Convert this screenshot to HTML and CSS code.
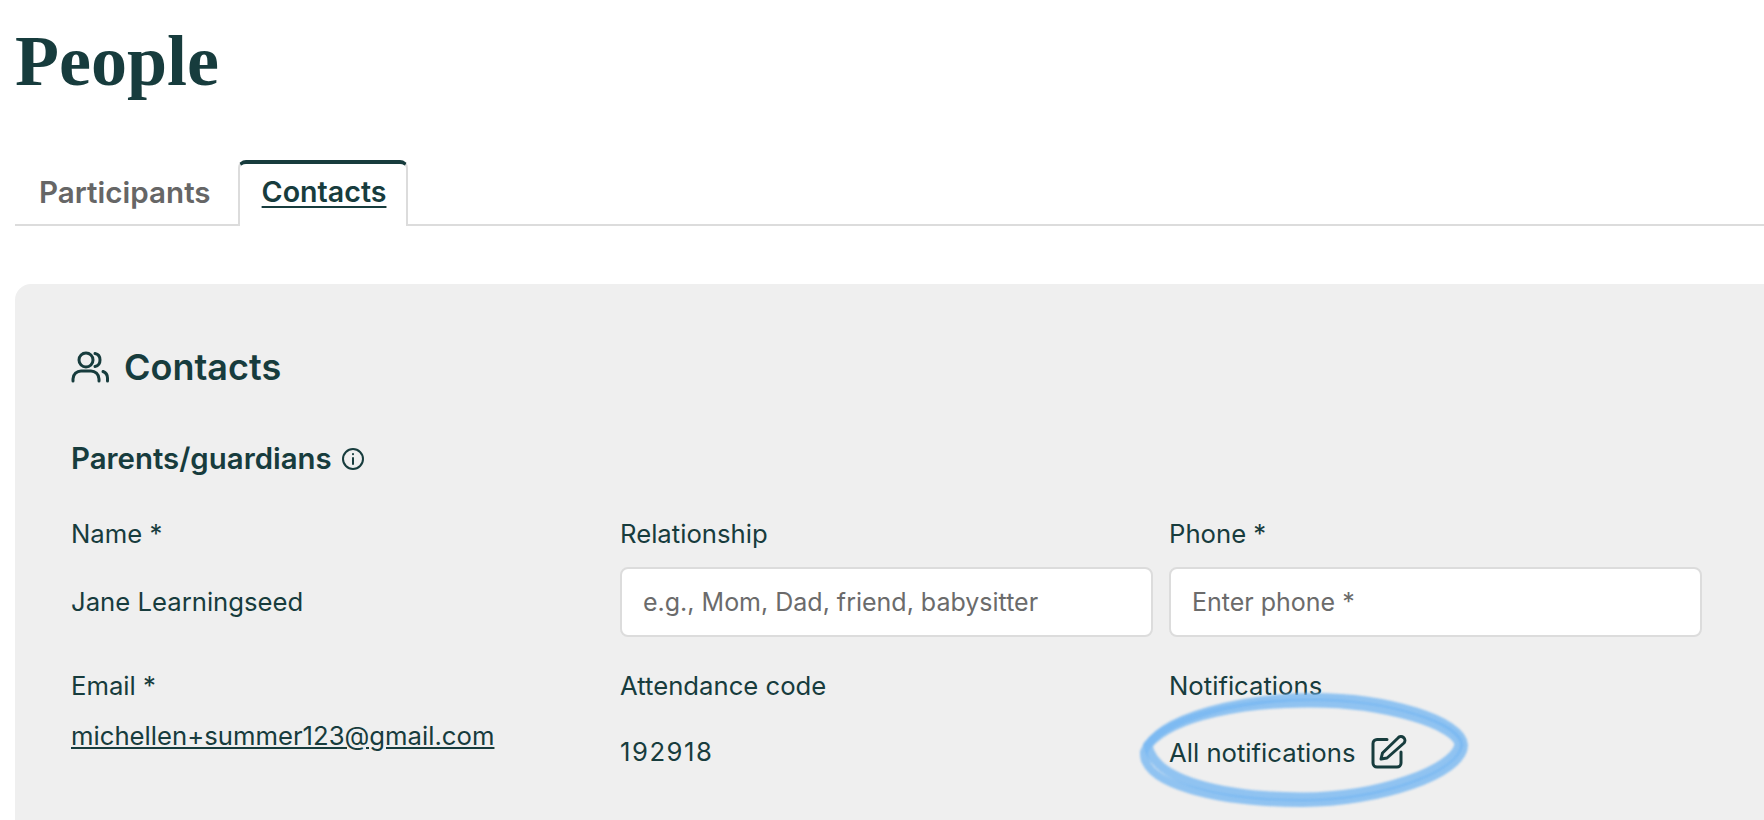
FILE: index.html
```html
<!DOCTYPE html>
<html lang="en">
<head>
    <meta charset="UTF-8">
    <title>People</title>
    <link rel="stylesheet" href="styles.css">
</head>
<body>
    <h1 class="page-title">People</h1>
    <div class="tabs">
        <a class="tab">Participants</a>
        <a class="tab tab-active">Contacts</a>
    </div>
    <section class="panel">
        <h2 class="panel-title">
            <svg class="icon-people" viewBox="0 0 38 32" fill="none" stroke="#173c3d" stroke-width="3" stroke-linecap="round">
                <circle cx="15" cy="9" r="7"/>
                <path d="M2 30v-2c0-5 4-8 8-8h10c4 0 8 3 8 8v2"/>
                <path d="M24 2.500c3 .6 5 3.300 5 6.500s-2 5.900-5 6.500"/>
                <path d="M32 20.500c2.500 1 4.500 3.500 4.500 6.500v3"/>
            </svg>
            Contacts
        </h2>
        <h3 class="section-title">
            Parents/guardians
            <svg class="icon-info" viewBox="0 0 24 24" fill="none" stroke="#173c3d" stroke-width="2" stroke-linecap="round">
                <circle cx="12" cy="12" r="10"/>
                <path d="M12 11v6"/>
                <path d="M12 7v.2"/>
            </svg>
        </h3>
        <div class="contact-grid">
            <div class="label">Name *</div>
            <div class="label">Relationship</div>
            <div class="label">Phone *</div>

            <div class="value">Jane Learningseed</div>
            <input class="field" type="text" placeholder="e.g., Mom, Dad, friend, babysitter">
            <input class="field" type="text" placeholder="Enter phone *">

            <div class="label label-second">Email *</div>
            <div class="label label-second">Attendance code</div>
            <div class="label label-second">Notifications</div>

            <div><a class="email">michellen+summer123@gmail.com</a></div>
            <div class="value-low code">192918</div>
            <div class="value-low notify">
                All notifications
                <svg class="icon-edit" viewBox="0 0 36 36" fill="none" stroke="#173c3d" stroke-width="3" stroke-linecap="round" stroke-linejoin="round">
                    <path d="M16 4.500H6a4 4 0 0 0-4 4V28a4 4 0 0 0 4 4h20a4 4 0 0 0 4-4V17"/>
                    <path d="M10 24l1.500-6L27 3a3.500 3.500 0 0 1 6 5L16 23z"/>
                </svg>
                <svg class="highlight" viewBox="0 0 334 120" fill="none" stroke="#78b8f1" stroke-linecap="round">
                    <path class="stroke-main" d="M6 62C20 25 110 7 175 7c75 0 150 23 151 48 0 30-86 58-161 58C80 113 4 95 6 62z"/>
                    <path class="stroke-soft" d="M10 55c25-30 100-43 165-42 70 0 145 22 146 42-6 25-81 52-156 52C85 107 15 90 10 55z"/>
                </svg>
            </div>
        </div>
    </section>
</body>
</html>
```

FILE: styles.css
```css
html, body {
    height: 100%;
}

body {
    margin: 0;
    padding-left: 15px;
    box-sizing: border-box;
    display: flex;
    flex-direction: column;
    overflow: hidden;
    background: #fff;
    color: #173c3d;
    font-family: 'Inter', 'Noto Sans', sans-serif;
}

.page-title {
    margin: 20px 0 0;
    font-family: 'Liberation Serif', serif;
    font-size: 72px;
    line-height: 83px;
    font-weight: 700;
}

.tabs {
    display: flex;
    margin-top: 57px;
    height: 64px;
    border-bottom: 2px solid #dcdcdc;
}

.tab {
    box-sizing: border-box;
    height: 66px;
    padding: 14px 26px 0 24px;
    font-size: 29.600px;
    font-weight: 600;
    line-height: 36px;
    color: #666;
}

.tab-active {
    margin-left: 1px;
    padding: 10px 20px 0 22px;
    background: #fff;
    color: #173c3d;
    font-size: 28.600px;
    text-decoration: underline;
    text-underline-offset: 4px;
    border: 2px solid #dcdcdc;
    border-top: 4px solid #173c3d;
    border-bottom: none;
    border-radius: 8px 8px 0 0;
}

.panel {
    flex: 1;
    margin-top: 58px;
    padding: 59px 0 0 56px;
    background: #efefef;
    border-radius: 16px 0 0 0;
}

.panel-title {
    display: flex;
    align-items: center;
    gap: 15px;
    margin: 0;
    font-size: 36px;
    line-height: 48px;
    font-weight: 600;
}

.icon-people {
    width: 38px;
    height: 32px;
}

.section-title {
    display: flex;
    align-items: center;
    gap: 9px;
    margin: 49px 0 0;
    font-size: 29.400px;
    line-height: 38px;
    font-weight: 600;
}

.icon-info {
    width: 24px;
    height: 24px;
}

.contact-grid {
    display: grid;
    grid-template-columns: 533px 533px 533px;
    column-gap: 16px;
    margin-top: 39px;
    font-size: 25.700px;
}

.label {
    line-height: 34px;
    height: 50px;
}

.label-second {
    height: 50px;
    margin-top: 32px;
}

.value {
    align-self: center;
    line-height: 34px;
}

.field {
    box-sizing: border-box;
    width: 100%;
    height: 70px;
    padding: 0 21px;
    border: 2px solid #dcdcdc;
    border-radius: 8px;
    background: #fff;
    color: #173c3d;
    font-family: inherit;
    font-size: 25px;
}

.field::placeholder {
    color: #6b6b6b;
    opacity: 1;
}

.email {
    color: #173c3d;
    line-height: 34px;
    text-decoration: underline;
}

.value-low {
    margin-top: 16px;
    line-height: 34px;
}

.code {
    letter-spacing: 1.500px;
}

.notify {
    position: relative;
    display: flex;
    align-items: center;
    gap: 16px;
}

.icon-edit {
    width: 36px;
    height: 36px;
}

.highlight {
    position: absolute;
    left: -31px;
    top: -45px;
    width: 334px;
    height: 120px;
    filter: blur(0.8px);
}

.stroke-main {
    stroke-width: 8;
    opacity: 0.8;
}

.stroke-soft {
    stroke-width: 9;
    opacity: 0.8;
}
```
